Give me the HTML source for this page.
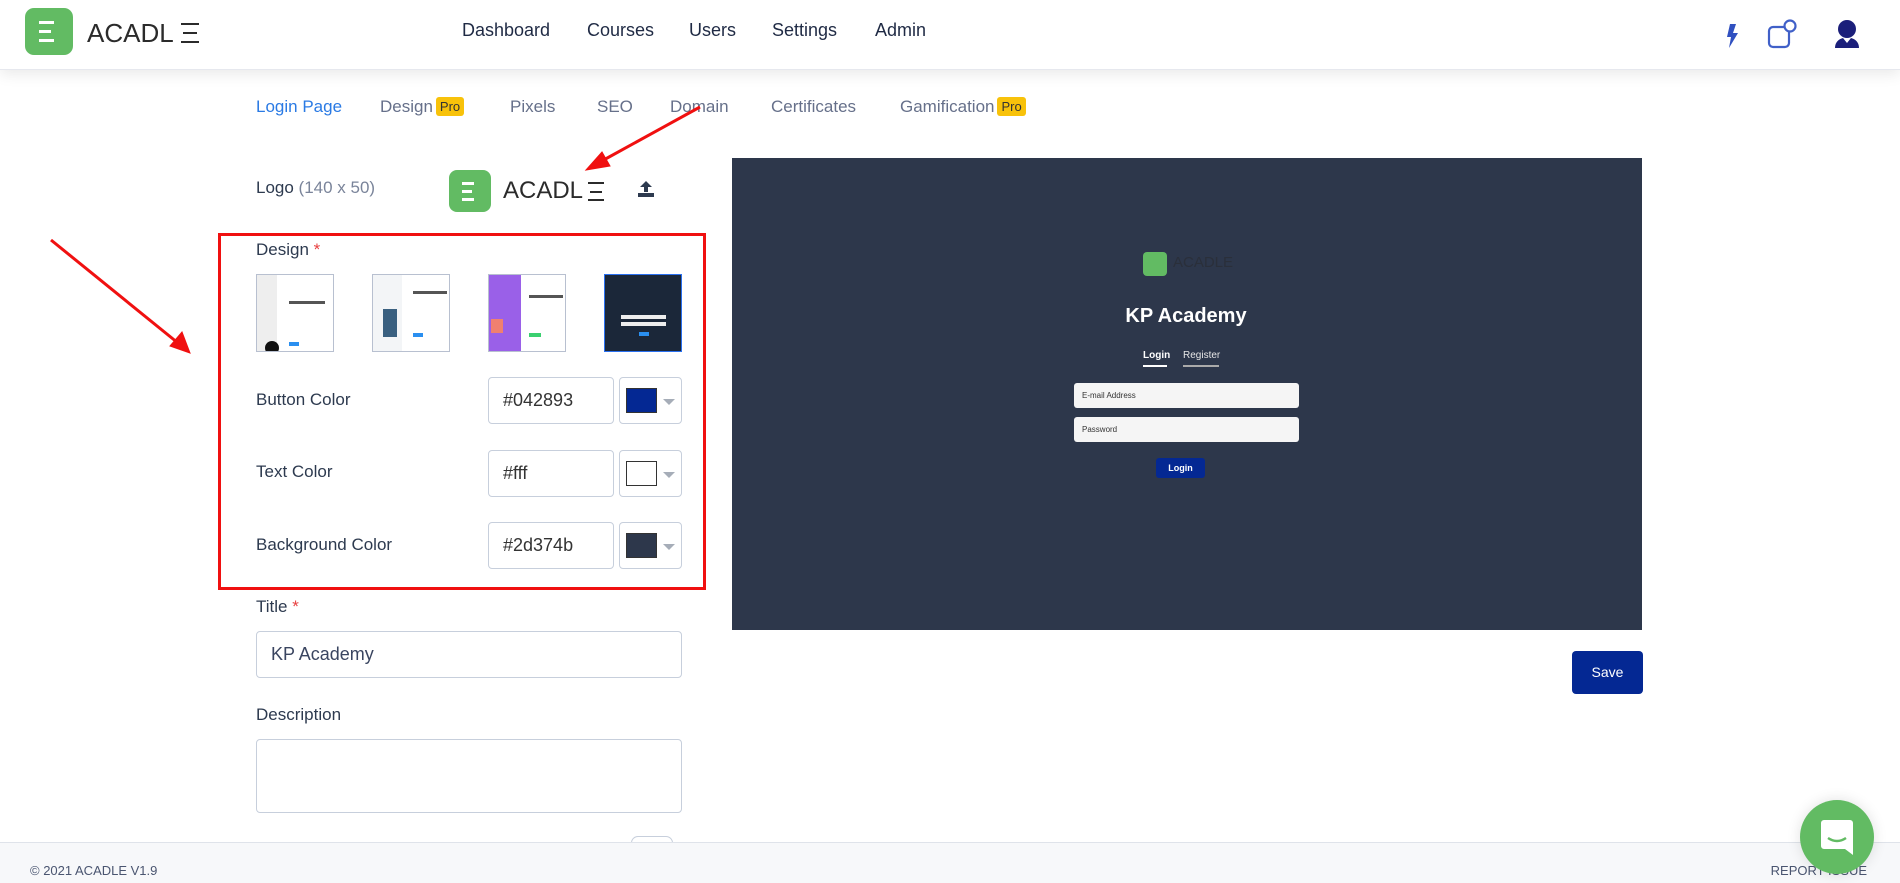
<!DOCTYPE html>
<html><head><meta charset="utf-8"><style>
*{box-sizing:border-box;margin:0;padding:0}
body{width:1900px;height:883px;overflow:hidden;background:#fff;font-family:"Liberation Sans",sans-serif;position:relative;color:#2d3a4f}
.a{position:absolute}
.hdr{left:0;top:0;width:1900px;height:70px;background:#fff;box-shadow:0 4px 14px rgba(0,0,0,.09);border-bottom:1px solid #e6e8ee;z-index:2}
.nav{font-size:18px;color:#1f2a44;top:20px}
.tab{font-size:17px;color:#66708a;top:97px}
.pro{display:inline-block;background:#f8c20a;color:#333;font-size:13px;padding:2px 4px;border-radius:3px;margin-left:3px;vertical-align:1px}
.lbl{font-size:17px;color:#2d3a4f}
.inp{border:1px solid #c7cfdc;border-radius:4px;background:#fff}
.hex{font-size:18px;color:#333;padding-left:14px;line-height:45px}
.sw{width:63px}
.sw i{position:absolute;left:6px;top:10px;width:31px;height:25px;border:1px solid #333}
.sw b{position:absolute;left:43px;top:21px;border-left:6px solid transparent;border-right:6px solid transparent;border-top:6px solid #a6adb8}
.th{width:78px;height:78px;border:1.5px solid #b8c0d0;overflow:hidden}
</style></head><body>
<div class="a hdr">
 <div class="a" style="left:25px;top:8px;width:48px;height:47px;background:#62bb63;border-radius:9px">
  <div class="a" style="left:14px;top:13px;width:15px;height:3px;background:#fff"></div>
  <div class="a" style="left:14px;top:22px;width:12px;height:3px;background:#fff"></div>
  <div class="a" style="left:14px;top:31px;width:15px;height:3px;background:#fff"></div>
 </div>
 <div class="a" style="left:87px;top:18px;font-size:26px;color:#2b2b2b">ACADL</div>
 <div class="a" style="left:181px;top:23px;width:18px;height:2px;background:#2b2b2b"></div>
 <div class="a" style="left:183px;top:32px;width:14px;height:2px;background:#2b2b2b"></div>
 <div class="a" style="left:181px;top:41px;width:18px;height:2px;background:#2b2b2b"></div>
 <div class="a nav" style="left:462px">Dashboard</div>
 <div class="a nav" style="left:587px">Courses</div>
 <div class="a nav" style="left:689px">Users</div>
 <div class="a nav" style="left:772px">Settings</div>
 <div class="a nav" style="left:875px">Admin</div>
 <svg class="a" style="left:1724px;top:22px" width="16" height="28" viewBox="0 0 16 28"><path d="M6 2h6l-3 9h5L5 26l2-11H3z" fill="#3050c0"/></svg>
 <svg class="a" style="left:1766px;top:18px" width="32" height="32" viewBox="0 0 32 32"><rect x="3" y="9" width="20" height="20" rx="4" fill="none" stroke="#4060c8" stroke-width="2.2"/><circle cx="24" cy="8" r="5.5" fill="#fff" stroke="#4060c8" stroke-width="2.2"/></svg>
 <svg class="a" style="left:1833px;top:18px" width="28" height="32" viewBox="0 0 28 32"><circle cx="14" cy="11" r="9" fill="#1b1f7a"/><path d="M2 30c0-6 4-9 8-10l4 5 4-5c4 1 8 4 8 10z" fill="#1b1f7a"/></svg>
</div>

<div class="a tab" style="left:256px;color:#2a7ae4">Login Page</div>
<div class="a tab" style="left:380px">Design<span class="pro">Pro</span></div>
<div class="a tab" style="left:510px">Pixels</div>
<div class="a tab" style="left:597px">SEO</div>
<div class="a tab" style="left:670px">Domain</div>
<div class="a tab" style="left:771px">Certificates</div>
<div class="a tab" style="left:900px">Gamification<span class="pro">Pro</span></div>

<div class="a lbl" style="left:256px;top:178px">Logo <span style="color:#7a849a">(140 x 50)</span></div>
<div class="a" style="left:449px;top:170px;width:42px;height:42px;background:#62bb63;border-radius:8px">
 <div class="a" style="left:13px;top:12px;width:12px;height:3px;background:#fff"></div>
 <div class="a" style="left:13px;top:20px;width:10px;height:3px;background:#fff"></div>
 <div class="a" style="left:13px;top:28px;width:12px;height:3px;background:#fff"></div>
</div>
<div class="a" style="left:503px;top:177px;font-size:24px;color:#2b2b2b">ACADL</div>
<div class="a" style="left:588px;top:182px;width:16px;height:2px;background:#2b2b2b"></div>
<div class="a" style="left:590px;top:191px;width:12px;height:2px;background:#2b2b2b"></div>
<div class="a" style="left:588px;top:199px;width:16px;height:2px;background:#2b2b2b"></div>
<svg class="a" style="left:637px;top:180px" width="18" height="18" viewBox="0 0 18 18"><path d="M9 1l6 6h-4v5H7V7H3z" fill="#2d3a4f"/><rect x="1" y="13" width="16" height="4" fill="#2d3a4f"/></svg>

<div class="a" style="left:218px;top:233px;width:488px;height:357px;border:3px solid #f01010"></div>
<div class="a lbl" style="left:256px;top:240px">Design <span style="color:#e84040">*</span></div>
<div class="a th" style="left:256px;top:274px;background:linear-gradient(90deg,#eee 0 26%,#fff 26%)">
 <div class="a" style="left:8px;top:66px;width:14px;height:14px;border-radius:50%;background:#111"></div>
 <div class="a" style="left:32px;top:26px;width:36px;height:3px;background:#555"></div>
 <div class="a" style="left:32px;top:67px;width:10px;height:4px;background:#2a8ff0"></div></div>
<div class="a th" style="left:372px;top:274px;background:linear-gradient(90deg,#f3f5f7 0 38%,#fff 38%)">
 <div class="a" style="left:40px;top:16px;width:34px;height:3px;background:#555"></div>
 <div class="a" style="left:10px;top:34px;width:14px;height:28px;background:#3a6080"></div>
 <div class="a" style="left:40px;top:58px;width:10px;height:4px;background:#2a8ff0"></div></div>
<div class="a th" style="left:488px;top:274px;background:linear-gradient(90deg,#9a60e8 0 42%,#fff 42%)">
 <div class="a" style="left:2px;top:44px;width:12px;height:14px;background:#f08070"></div>
 <div class="a" style="left:40px;top:20px;width:34px;height:3px;background:#555"></div>
 <div class="a" style="left:40px;top:58px;width:12px;height:4px;background:#3ad070"></div></div>
<div class="a th" style="left:604px;top:274px;background:#1b2739;border-color:#2a70f0">
 <div class="a" style="left:16px;top:40px;width:45px;height:4px;background:#eee"></div>
 <div class="a" style="left:16px;top:47px;width:45px;height:4px;background:#eee"></div>
 <div class="a" style="left:34px;top:57px;width:10px;height:4px;background:#2a8ff0"></div></div>

<div class="a lbl" style="left:256px;top:390px">Button Color</div>
<div class="a inp hex" style="left:488px;top:377px;width:126px;height:47px">#042893</div>
<div class="a inp sw" style="left:619px;top:377px;height:47px"><i style="background:#042893"></i><b></b></div>
<div class="a lbl" style="left:256px;top:462px">Text Color</div>
<div class="a inp hex" style="left:488px;top:450px;width:126px;height:47px">#fff</div>
<div class="a inp sw" style="left:619px;top:450px;height:47px"><i style="background:#fff"></i><b></b></div>
<div class="a lbl" style="left:256px;top:535px">Background Color</div>
<div class="a inp hex" style="left:488px;top:522px;width:126px;height:47px">#2d374b</div>
<div class="a inp sw" style="left:619px;top:522px;height:47px"><i style="background:#2d374b"></i><b></b></div>

<div class="a lbl" style="left:256px;top:597px">Title <span style="color:#e84040">*</span></div>
<div class="a inp hex" style="left:256px;top:631px;width:426px;height:47px;color:#3a4560">KP Academy</div>
<div class="a lbl" style="left:256px;top:705px">Description</div>
<div class="a inp" style="left:256px;top:739px;width:426px;height:74px"></div>
<div class="a" style="left:631px;top:836px;width:42px;height:14px;border:1px solid #c7cfdc;border-radius:10px"></div>

<div class="a" style="left:732px;top:158px;width:910px;height:472px;background:#2d374b">
 <div class="a" style="left:411px;top:94px;width:24px;height:24px;background:#62bb63;border-radius:4px"></div>
 <div class="a" style="left:441px;top:96px;font-size:15px;color:#2a2f3a">ACADLE</div>
 <div class="a" style="left:0;top:147px;width:908px;text-align:center;font-size:20px;font-weight:bold;color:#fff">KP Academy</div>
 <div class="a" style="left:411px;top:192px;font-size:10px;font-weight:bold;color:#fff">Login</div>
 <div class="a" style="left:411px;top:207px;width:24px;height:2px;background:#fff"></div>
 <div class="a" style="left:451px;top:192px;font-size:10px;color:#e6e6e6">Register</div>
 <div class="a" style="left:451px;top:207px;width:36px;height:2px;background:#aaa"></div>
 <div class="a" style="left:342px;top:225px;width:225px;height:25px;background:#f5f5f5;border-radius:3px;font-size:8px;color:#333;padding:8px 8px">E-mail Address</div>
 <div class="a" style="left:342px;top:259px;width:225px;height:25px;background:#f5f5f5;border-radius:3px;font-size:8px;color:#333;padding:8px 8px">Password</div>
 <div class="a" style="left:424px;top:300px;width:49px;height:20px;background:#042893;border-radius:3px;font-size:9px;font-weight:bold;color:#fff;text-align:center;line-height:20px">Login</div>
</div>
<div class="a" style="left:1572px;top:651px;width:71px;height:43px;background:#042893;border-radius:4px;color:#fff;font-size:14px;text-align:center;line-height:43px">Save</div>

<svg class="a" style="left:0;top:0;z-index:3" width="1900" height="883"><g stroke="#f01010" stroke-width="3" fill="#f01010"><line x1="700" y1="107" x2="600" y2="162"/><polygon points="586,170 602,152 610,166" stroke-width="1"/><line x1="51" y1="240" x2="178" y2="343"/><polygon points="190,353 170,346 182,332" stroke-width="1"/></g></svg>

<div class="a" style="left:0;top:842px;width:1900px;height:41px;background:#f7f8fa;border-top:1px solid #dfe3ea">
 <div class="a" style="left:30px;top:20px;font-size:13px;color:#4a5570">© 2021 ACADLE V1.9</div>
 <div class="a" style="right:33px;top:20px;font-size:13px;color:#4a5570">REPORT ISSUE</div>
</div>
<div class="a" style="left:1800px;top:800px;width:74px;height:74px;border-radius:50%;background:#62bb63;box-shadow:0 0 14px rgba(0,0,0,.12);z-index:4">
 <svg class="a" style="left:20px;top:19px" width="34" height="37" viewBox="0 0 34 37"><path d="M4 1h26a3 3 0 013 3v32l-8-6H4a3 3 0 01-3-3V4a3 3 0 013-3z" fill="#fff"/><path d="M8 19q9 6 18 0" stroke="#62bb63" stroke-width="2.5" fill="none"/></svg>
</div>
</body></html>
